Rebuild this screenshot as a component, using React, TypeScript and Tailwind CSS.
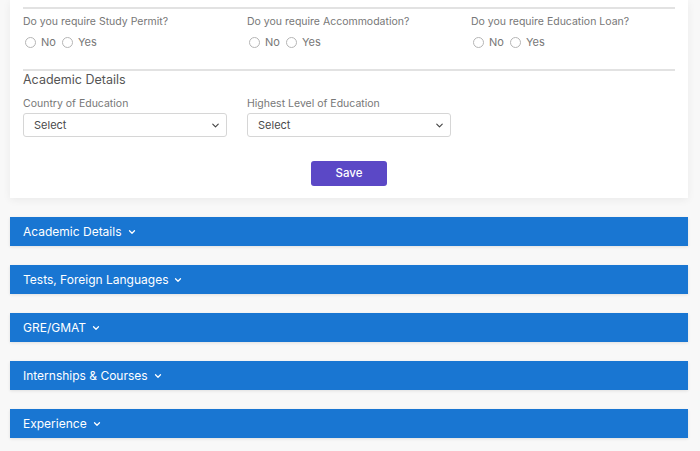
import { ChevronDown } from "lucide-react";

const questions = [
  "Do you require Study Permit?",
  "Do you require Accommodation?",
  "Do you require Education Loan?",
];

const sections = [
  "Academic Details",
  "Tests, Foreign Languages",
  "GRE/GMAT",
  "Internships & Courses",
  "Experience",
];

function Radio({ label }: { label: string }) {
  return (
    <label className="flex items-center gap-[5px]">
      <span className="h-[11px] w-[11px] rounded-full border border-[#b5b5b5] bg-white" />
      <span>{label}</span>
    </label>
  );
}

function SelectBox() {
  return (
    <div className="flex h-[24px] w-[204px] items-center justify-between rounded-[3px] border border-[#d6d6d6] bg-white pl-[10px] pr-[5px] text-[11px] text-[#4a4a4a]">
      <span>Select</span>
      <ChevronDown className="h-[11px] w-[11px] text-[#444]" strokeWidth={2.5} />
    </div>
  );
}

export default function App() {
  return (
    <div
      className="min-h-[451px] w-[700px] bg-[#f8f8f8] pb-[12px] text-[#777]"
      style={{ fontFamily: "Inter, 'Noto Sans', sans-serif" }}
    >
      <div className="ml-[10px] w-[678px] bg-white px-[13px] pb-[12px] pt-[7px] shadow-[0_2px_8px_rgba(0,0,0,0.06)]">
        <div className="border-t-2 border-[#e2e2e2]" />
        <div className="mt-[6px] grid grid-cols-[204px_204px_204px] gap-x-[20px] text-[10.5px]">
          {questions.map((q) => (
            <div key={q}>
              <div className="leading-[14px]">{q}</div>
              <div className="mt-[6px] flex items-center gap-[6px] pl-[2px] leading-[14px] text-[11px]">
                <Radio label="No" />
                <Radio label="Yes" />
              </div>
            </div>
          ))}
        </div>
        <div className="mt-[20px] border-t-2 border-[#e2e2e2]" />
        <div className="text-[12.5px] leading-[18px] text-[#555]">Academic Details</div>
        <div className="mt-[8px] flex gap-[20px] text-[10.5px]">
          <div>
            <div className="mb-[2px] leading-[14px]">Country of Education</div>
            <SelectBox />
          </div>
          <div>
            <div className="mb-[2px] leading-[14px]">Highest Level of Education</div>
            <SelectBox />
          </div>
        </div>
        <div className="mt-[24px] flex justify-center">
          <button className="h-[25px] w-[76px] rounded-[3px] bg-[#5b48c6] text-[11.5px] font-medium text-white">
            Save
          </button>
        </div>
      </div>
      <div className="mt-[19px] flex flex-col gap-[19px]">
        {sections.map((s) => (
          <div
            key={s}
            className="ml-[10px] flex h-[29px] w-[678px] items-center gap-[5px] bg-[#1976d2] px-[13px] text-[12px] text-white shadow-[0_1px_3px_rgba(0,0,0,0.1)]"
          >
            <span>{s}</span>
            <ChevronDown className="h-[10px] w-[10px]" strokeWidth={3} />
          </div>
        ))}
      </div>
    </div>
  );
}
